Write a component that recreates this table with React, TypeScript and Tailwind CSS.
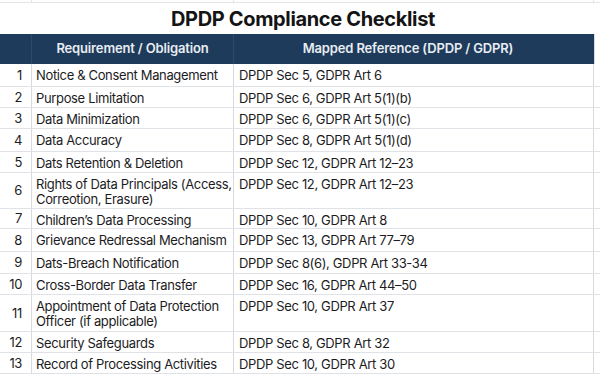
import React from 'react';

const rows: { n: number; req: string; ref: string; h: string }[] = [
  { n: 1, req: 'Notice & Consent Management', ref: 'DPDP Sec 5, GDPR Art 6', h: 'h-[23px]' },
  { n: 2, req: 'Purpose Limitation', ref: 'DPDP Sec 6, GDPR Art 5(1)(b)', h: 'h-[21px]' },
  { n: 3, req: 'Data Minimization', ref: 'DPDP Sec 6, GDPR Art 5(1)(c)', h: 'h-[21px]' },
  { n: 4, req: 'Data Accuracy', ref: 'DPDP Sec 8, GDPR Art 5(1)(d)', h: 'h-[23px]' },
  { n: 5, req: 'Dats Retention & Deletion', ref: 'DPDP Sec 12, GDPR Art 12–23', h: 'h-[21px]' },
  { n: 6, req: 'Rights of Data Principals (Access, Correotion, Erasure)', ref: 'DPDP Sec 12, GDPR Art 12–23', h: 'h-[36px]' },
  { n: 7, req: 'Children’s Data Processing', ref: 'DPDP Sec 10, GDPR Art 8', h: 'h-[20px]' },
  { n: 8, req: 'Grievance Redressal Mechanism', ref: 'DPDP Sec 13, GDPR Art 77–79', h: 'h-[23px]' },
  { n: 9, req: 'Dats-Breach Notification', ref: 'DPDP Sec 8(6), GDPR Art 33-34', h: 'h-[22px]' },
  { n: 10, req: 'Cross-Border Data Transfer', ref: 'DPDP Sec 16, GDPR Art 44–50', h: 'h-[21px]' },
  { n: 11, req: 'Appointment of Data Protection Officer (if applicable)', ref: 'DPDP Sec 10, GDPR Art 37', h: 'h-[37px]' },
  { n: 12, req: 'Security Safeguards', ref: 'DPDP Sec 8, GDPR Art 32', h: 'h-[21px]' },
  { n: 13, req: 'Record of Processing Activities', ref: 'DPDP Sec 10, GDPR Art 30', h: 'h-[21px]' },
];

const App = () => {
  return (
    <div className="w-[600px] h-[376px] overflow-hidden bg-white text-[#1c1c1e] font-['Inter',sans-serif]">
      {/* cut-off row above the title */}
      <div className="flex h-[3px] border-b border-[#e3e5e8]">
        <div className="w-[32px] border-r border-[#e3e5e8]" />
        <div className="w-[202px] border-r border-[#e3e5e8]" />
        <div className="w-[360px] border-r border-[#e3e5e8]" />
      </div>

      <div className="h-[31px] flex items-center justify-center pl-[6px]">
        <h1 className="text-[20px] font-bold tracking-[-0.35px] text-[#141414]">DPDP Compliance Checklist</h1>
      </div>

      {/* header */}
      <div className="flex h-[30px] bg-[#1f3b5c] text-[#e8edf2] text-[13px] font-semibold tracking-[-0.15px]">
        <div className="w-[32px] border-r border-[#2e4a6b]" />
        <div className="w-[202px] border-r border-[#2e4a6b] flex items-center justify-center">
          Requirement / Obligation
        </div>
        <div className="w-[360px] flex items-center justify-center pr-[12px]">
          Mapped Reference (DPDP / GDPR)
        </div>
        <div className="flex-1 border-l border-[#d6dade] bg-white" />
      </div>

      {rows.map((r) => (
        <div key={r.n} className={`flex ${r.h} border-b border-[#dfe2e6] text-[13px] leading-[15px] tracking-[-0.35px]`}>
          <div className="w-[32px] border-r border-[#d6dade] flex items-center justify-end pr-[9px]">
            {r.n}
          </div>
          <div className="w-[202px] border-r border-[#d6dade] pl-[4px] pr-[1px] pt-[4px]">{r.req}</div>
          <div className="w-[360px] border-r border-[#d6dade] pl-[5px] pt-[4px]">{r.ref}</div>
          <div className="flex-1" />
        </div>
      ))}
    </div>
  );
};

export default App;
